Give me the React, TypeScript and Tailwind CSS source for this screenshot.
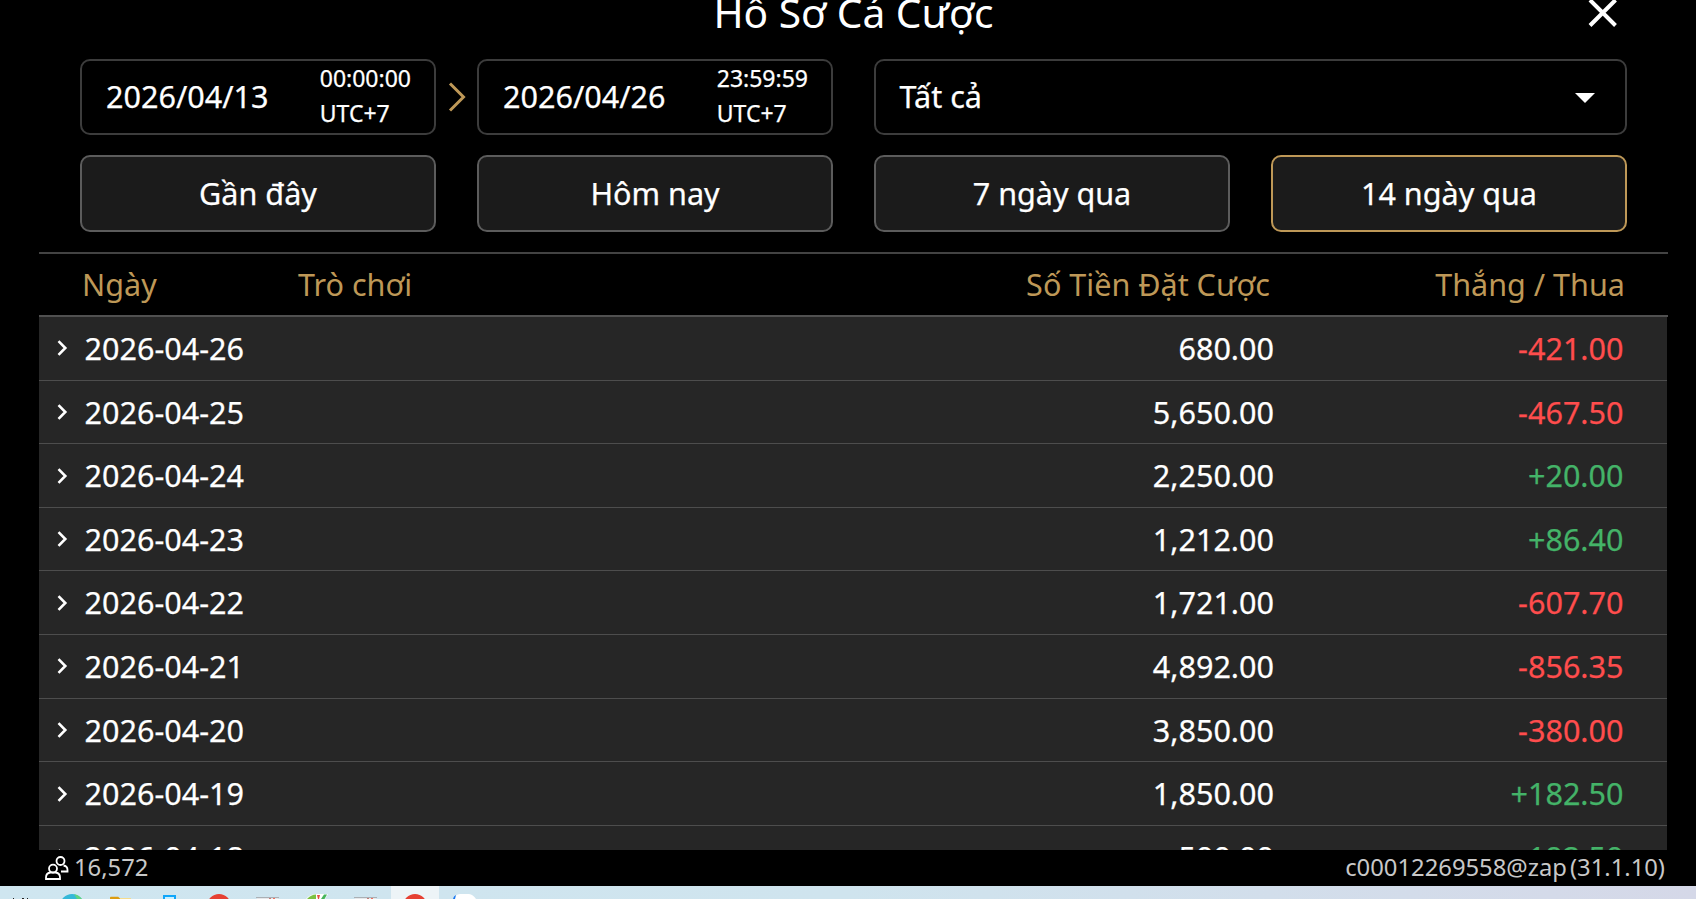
import { ReactNode } from 'react';

interface BetDay {
  date: string;
  stake: string;
  result: string;
}

const days: BetDay[] = [
  { date: '2026-04-26', stake: '680.00', result: '-421.00' },
  { date: '2026-04-25', stake: '5,650.00', result: '-467.50' },
  { date: '2026-04-24', stake: '2,250.00', result: '+20.00' },
  { date: '2026-04-23', stake: '1,212.00', result: '+86.40' },
  { date: '2026-04-22', stake: '1,721.00', result: '-607.70' },
  { date: '2026-04-21', stake: '4,892.00', result: '-856.35' },
  { date: '2026-04-20', stake: '3,850.00', result: '-380.00' },
  { date: '2026-04-19', stake: '1,850.00', result: '+182.50' },
  { date: '2026-04-18', stake: '500.00', result: '+192.50' },
];

const ranges = ['Gần đây', 'Hôm nay', '7 ngày qua', '14 ngày qua'];

function DateField({ date, time, children }: { date: string; time: string; children?: ReactNode }) {
  return (
    <div className="relative flex h-[76px] items-center justify-between rounded-[10px] border-2 border-[#3c3c3c] pl-6 pr-[23px]">
      <span className="pb-0.5 leading-none">{date}</span>
      <span className="pb-0.5 text-[23px] leading-[35px]">
        {time}
        <br />
        UTC+7
      </span>
      {children}
    </div>
  );
}

function DayRow({ day }: { day: BetDay }) {
  const color = day.result.startsWith('-') ? 'text-[#ff4d4d]' : 'text-[#44b368]';

  return (
    <div className="flex h-[63.62px] shrink-0 items-center border-b border-[#4d4d4d] pt-px pl-[18px] pr-[43.5px]">
      <svg className="mb-px" width="12" height="16" viewBox="0 0 12 16" fill="none" stroke="#fff" strokeWidth="2.6">
        <path d="M1.500 1.200 8.300 8l-6.800 6.800" />
      </svg>
      <span className="ml-[15.5px] flex-1">{day.date}</span>
      <span>{day.stake}</span>
      <span className={`w-[349.5px] text-right ${color}`}>{day.result}</span>
    </div>
  );
}

function Taskbar() {
  return (
    <div className="h-[13px] bg-linear-to-r from-[#cfe6f0] via-[#cfe4ee] to-[#d5d8e8]">
      <svg width="500" height="13" viewBox="0 0 500 13">
        <rect x="391" y="0" width="48" height="13" fill="#edf4f7" />
        <g fill="#222">
          <rect x="13" y="12" width="1" height="1" />
          <rect x="22" y="12" width="2" height="1" />
          <rect x="27" y="12" width="1" height="1" />
        </g>
        <circle cx="72" cy="20" r="12" fill="#35b8d8" />
        <path d="M74 8.200a12 12 0 0 1 8 4.800h-5z" fill="#5fd57f" />
        <path d="M110 13v-1.500q0-.8.8-.8h7.400l2.300 2.300z" fill="#dc9c10" />
        <rect x="120" y="12" width="11" height="1" fill="#f5dc8c" />
        <path d="M164 13.500V10h11v3.500" fill="#c9efff" stroke="#10a6fa" strokeWidth="2" />
        <circle cx="219" cy="20" r="12" fill="#e64032" />
        {[256, 354].map((x) => (
          <g key={x}>
            <rect x={x} y="11" width="23" height="1" fill="#aab0b5" />
            <rect x={x + 1} y="12" width="21" height="1" fill="#e6e8ea" />
            <rect x={x + 13} y="12" width="2" height="1" fill="#c47d78" />
            <rect x={x + 17} y="12" width="2" height="1" fill="#f0705f" />
          </g>
        ))}
        <path d="M306 13q4-5 11-5h11l-3 5z" fill="#fff" />
        <path d="M307 13q4-4.500 9-4.500V13z" fill="#7cc142" />
        <path d="m317 9 3 0-1 4h-1z" fill="#e65040" />
        <path d="m321 13 3-4.500h3l-2.500 4.500z" fill="#45b55b" />
        <circle cx="415" cy="20" r="12" fill="#e64032" />
        <path d="M454 13q1-4.500 6-5h9q4 .5 7 5z" fill="#fff" />
        <path d="M453 13q.5-3 3-4l-1 4z" fill="#1877f2" />
      </svg>
    </div>
  );
}

export default function App() {
  return (
    <div className="flex h-[899px] w-[1696px] flex-col overflow-hidden bg-black font-['Noto_Sans',sans-serif] text-[30.55px] text-white">
      <header className="relative h-[59px] shrink-0">
        <h1 className="-mt-4 pl-[11px] text-center text-[40.7px] leading-[56px]">Hồ Sơ Cá Cược</h1>
        <button className="absolute top-[-3px] left-[1587px]">
          <svg width="32" height="32" viewBox="0 0 32 32" fill="none" stroke="#fff" strokeWidth="4">
            <path d="M3 3 28.500 28.500M28.500 3 3 28.500" />
          </svg>
        </button>
      </header>

      {/* Filters */}
      <section className="grid shrink-0 grid-cols-4 gap-x-[41px] gap-y-5 pl-20 pr-[69px] [-webkit-text-stroke:0.25px]">
        <DateField date="2026/04/13" time="00:00:00">
          <svg className="absolute top-[20px] left-[366px]" width="20" height="32" viewBox="0 0 20 32" fill="none" stroke="#be9857" strokeWidth="3">
            <path d="M2 2.500 15.500 16 2 29.500" />
          </svg>
        </DateField>
        <DateField date="2026/04/26" time="23:59:59" />
        <div className="col-span-2 flex h-[76px] items-center justify-between rounded-[10px] border-2 border-[#3c3c3c] pl-[23.5px] pr-[30px]">
          <span className="pb-0.5 leading-none">Tất cả</span>
          <svg className="mt-px" width="20" height="10" viewBox="0 0 20 10">
            <path d="M0 0h20L10 10z" fill="#fff" />
          </svg>
        </div>
        {ranges.map((range) => (
          <button
            key={range}
            className={`h-[77px] rounded-[10px] border-2 bg-[#1b1b1b] ${range === '14 ngày qua' ? 'border-[#be9857]' : 'border-[#5c5c5c]'}`}
          >
            {range}
          </button>
        ))}
      </section>

      {/* Bet history */}
      <section className="mx-[39px] mt-5 w-[1629px] shrink-0">
        <div className="flex h-[65px] items-center border-t-2 border-b-2 border-t-[#434343] border-b-[#505050] pl-[43px] pr-[43px] text-[#be9857]">
          <span className="w-[216px]">Ngày</span>
          <span className="flex-1">Trò chơi</span>
          <span>Số Tiền Đặt Cược</span>
          <span className="w-[355px] text-right">Thắng / Thua</span>
        </div>
        <div className="flex h-[533px] w-[1628px] flex-col overflow-hidden bg-[#262626] [-webkit-text-stroke:0.25px]">
          {days.map((day) => (
            <DayRow key={day.date} day={day} />
          ))}
        </div>
      </section>

      <footer className="flex h-9 shrink-0 items-center justify-between pl-[45px] pr-[31px] text-[23.8px] leading-8 text-[#c8c8c8]">
        <span className="flex items-center">
          <svg width="24" height="24" viewBox="0 0 24 24" fill="none" stroke="#fff" strokeWidth="1.8">
            <circle cx="15.500" cy="5" r="4" />
            <circle cx="8" cy="12.600" r="4" />
            <path d="M1 23v-1.500q0-4.500 4.500-5h5q4.500.5 4.500 5V23zM16 15.500h6.500v-1.500q0-4-4-4.500" />
          </svg>
          <span className="ml-[5px] pb-[3px]">16,572</span>
        </span>
        <span className="flex gap-[3px] pb-[3px]">
          <span>c00012269558@zap</span>
          <span>(31.1.10)</span>
        </span>
      </footer>

      <Taskbar />
    </div>
  );
}
